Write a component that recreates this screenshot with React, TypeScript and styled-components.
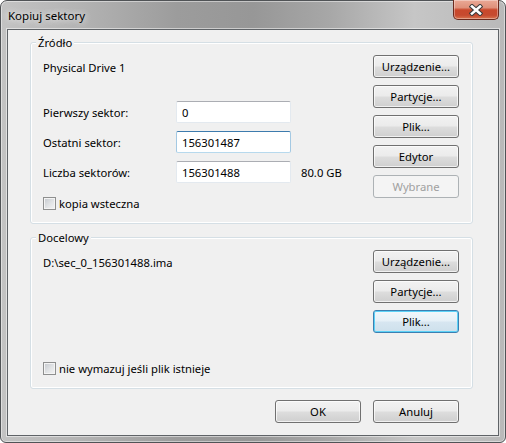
import React from 'react'
import styled, { createGlobalStyle, css } from 'styled-components'

const GlobalStyle = createGlobalStyle`
  html, body {
    margin: 0;
    padding: 0;
    background: #ffffff;
  }
  body {
    font-family: "Noto Sans", "Segoe UI", sans-serif;
    font-size: 11.25px;
    color: #000000;
  }
`

const Window = styled.div`
  width: 506px;
  height: 443px;
  box-sizing: border-box;
  display: flex;
  flex-direction: column;
  border: 1px solid #505356;
  border-radius: 7px 7px 6px 6px;
  background: linear-gradient(
    to right,
    #c3c3c3 0%,
    #b4b4b4 15%,
    #9c9c9c 35%,
    #979797 50%,
    #a7a7a7 65%,
    #c6c6c6 82%,
    #b9b9b9 100%
  );
  box-shadow: inset 0 0 0 1px rgba(255, 255, 255, 0.45);
`

const TitleBar = styled.div`
  height: 28px;
  display: flex;
  align-items: flex-start;
`

const TitleText = styled.span`
  padding-left: 7px;
  line-height: 29px;
  font-size: 11.5px;
  color: #000000;
  text-shadow: 0 0 6px rgba(255, 255, 255, 0.9), 0 0 10px rgba(255, 255, 255, 0.6);
`

const CloseButton = styled.div`
  margin: -1px 6px 0 auto;
  width: 46px;
  height: 20px;
  box-sizing: border-box;
  display: flex;
  align-items: center;
  justify-content: center;
  border: 1px solid #6b2a1e;
  border-top: none;
  border-radius: 0 0 5px 5px;
  background: linear-gradient(
    #eaa996 0%,
    #df917b 40%,
    #c9482c 52%,
    #c64a2f 80%,
    #d8744f 100%
  );
  box-shadow: inset 0 0 0 1px rgba(255, 255, 255, 0.35);
`

const Client = styled.div`
  flex: 1;
  margin: 0 6px 6px 6px;
  display: flex;
  flex-direction: column;
  padding: 12px 25px 12px 22px;
  border: 1px solid #5f6367;
  background: #f0f0f0;
  box-shadow: 0 0 0 1px rgba(255, 255, 255, 0.5);
`

const Group = styled.div<{ $height: number; $gap?: number }>`
  height: ${({ $height }) => $height}px;
  margin-top: ${({ $gap }) => $gap ?? 0}px;
  box-sizing: border-box;
  display: flex;
  flex-direction: column;
  border: 1px solid #d5dfe5;
  border-radius: 3px;
  box-shadow: inset 0 0 0 1px #ffffff;
`

const GroupTitle = styled.span`
  align-self: flex-start;
  margin: -8px 0 0 5px;
  padding: 0 2px;
  line-height: 16px;
  background: #f0f0f0;
`

const GroupBody = styled.div`
  flex: 1;
  display: flex;
`

const LeftCol = styled.div`
  flex: 1;
  display: flex;
  flex-direction: column;
  padding: 5px 0 12px 12px;
`

const ButtonCol = styled.div`
  display: flex;
  flex-direction: column;
  gap: 7px;
  padding: 4px 13px 0 0;
`

const InfoRow = styled.div`
  height: 23px;
  line-height: 23px;
  margin-bottom: 22px;
`

const FieldList = styled.div`
  display: flex;
  flex-direction: column;
  gap: 8px;
`

const FieldRow = styled.div`
  display: flex;
  align-items: center;
  height: 22px;
`

const FieldLabel = styled.span`
  width: 133px;
`

const TextBox = styled.input<{ $focused?: boolean }>`
  width: 115px;
  height: 22px;
  box-sizing: border-box;
  margin: 0;
  padding: 0 5px;
  font: inherit;
  color: #000000;
  background: #ffffff;
  outline: none;
  border: 1px solid #e3e9ef;
  border-top-color: #abadb3;
  border-radius: 2px;
  ${({ $focused }) =>
    $focused &&
    css`
      border-color: #a4c9e3;
      border-top-color: #3d7bad;
      border-bottom-color: #b7d9ed;
    `}
`

const SizeText = styled.span`
  margin-left: 10px;
`

const CheckRow = styled.label`
  margin-top: auto;
  height: 16px;
  display: flex;
  align-items: center;
  gap: 3px;
`

const CheckBox = styled.span`
  width: 13px;
  height: 13px;
  box-sizing: border-box;
  border: 1px solid #8e8f8f;
  background: linear-gradient(135deg, #c4c8cd 0%, #e2e4e6 55%, #f4f4f4 100%);
  box-shadow: inset 0 0 0 1px #f4f4f4;
`

const Button = styled.button<{ $variant?: 'normal' | 'focused' }>`
  width: 86px;
  height: 23px;
  box-sizing: border-box;
  margin: 0;
  padding: 0;
  font: inherit;
  color: #000000;
  border: 1px solid #707070;
  border-radius: 3px;
  background: linear-gradient(#f2f2f2 0%, #ebebeb 48%, #dddddd 52%, #cfcfcf 100%);
  box-shadow: inset 0 0 0 1px rgba(255, 255, 255, 0.7);
  ${({ $variant }) =>
    $variant === 'focused' &&
    css`
      border-color: #3c7fb1;
      background: linear-gradient(#f1f7fb 0%, #e6f0f7 48%, #d7e6f1 52%, #cee0ec 100%);
      box-shadow: inset 0 0 0 1px #5cd2f7;
    `}
  &:disabled {
    color: #a0a0a0;
    border-color: #adb2b5;
    background: #f4f4f4;
    box-shadow: none;
  }
`

const Footer = styled.div`
  margin-top: 11px;
  display: flex;
  justify-content: flex-end;
  gap: 12px;
  padding-right: 14px;
`

function CloseGlyph() {
  return (
    <svg width="14" height="12" viewBox="0 0 14 12">
      <path d="M3 2.5 L11 9.5 M11 2.5 L3 9.5" stroke="#3b3b3b" strokeWidth="4.6" strokeLinecap="square" />
      <path d="M3 2.5 L11 9.5 M11 2.5 L3 9.5" stroke="#ffffff" strokeWidth="2.6" strokeLinecap="square" />
    </svg>
  )
}

const sourceFields = [
  { label: 'Pierwszy sektor:', value: '0' },
  { label: 'Ostatni sektor:', value: '156301487', focused: true },
  { label: 'Liczba sektorów:', value: '156301488', size: '80.0 GB' },
]

export default function App() {
  return (
    <>
      <GlobalStyle />
      <Window>
        <TitleBar>
          <TitleText>Kopiuj sektory</TitleText>
          <CloseButton>
            <CloseGlyph />
          </CloseButton>
        </TitleBar>
        <Client>
          <Group $height={182}>
            <GroupTitle>Źródło</GroupTitle>
            <GroupBody>
              <LeftCol>
                <InfoRow>Physical Drive 1</InfoRow>
                <FieldList>
                  {sourceFields.map(f => (
                    <FieldRow key={f.label}>
                      <FieldLabel>{f.label}</FieldLabel>
                      <TextBox readOnly value={f.value} $focused={f.focused} />
                      {f.size && <SizeText>{f.size}</SizeText>}
                    </FieldRow>
                  ))}
                </FieldList>
                <CheckRow>
                  <CheckBox />
                  kopia wsteczna
                </CheckRow>
              </LeftCol>
              <ButtonCol>
                <Button>Urządzenie...</Button>
                <Button>Partycje...</Button>
                <Button>Plik...</Button>
                <Button>Edytor</Button>
                <Button disabled>Wybrane</Button>
              </ButtonCol>
            </GroupBody>
          </Group>
          <Group $height={152} $gap={13}>
            <GroupTitle>Docelowy</GroupTitle>
            <GroupBody>
              <LeftCol>
                <InfoRow>D:\sec_0_156301488.ima</InfoRow>
                <CheckRow>
                  <CheckBox />
                  nie wymazuj jeśli plik istnieje
                </CheckRow>
              </LeftCol>
              <ButtonCol>
                <Button>Urządzenie...</Button>
                <Button>Partycje...</Button>
                <Button $variant="focused">Plik...</Button>
              </ButtonCol>
            </GroupBody>
          </Group>
          <Footer>
            <Button>OK</Button>
            <Button>Anuluj</Button>
          </Footer>
        </Client>
      </Window>
    </>
  )
}
